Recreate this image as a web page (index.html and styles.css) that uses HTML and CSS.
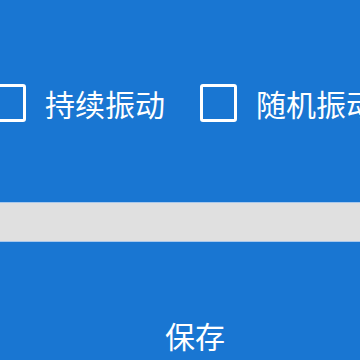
FILE: index.html
```html
<!DOCTYPE html>
<html lang="zh">
<head>
    <meta charset="UTF-8">
    <meta name="viewport" content="width=device-width, initial-scale=1.0">
    <title>振动设置</title>
    <link rel="stylesheet" href="styles.css">
</head>
<body>

    <!-- 振动模式 -->
    <div class="options">
        <label class="option">
            <span class="box"></span>
            <span class="label">持续振动</span>
        </label>
        <label class="option">
            <span class="box"></span>
            <span class="label">随机振动</span>
        </label>
    </div>

    <!-- 强度 -->
    <div class="track"></div>

    <!-- 保存 -->
    <div class="save">保存</div>

</body>
</html>
```

FILE: styles.css
```css
/* 基础 */
* {
    margin: 0;
    padding: 0;
    box-sizing: border-box;
}

body {
    font-family: "Noto Sans CJK SC", "Noto Sans", sans-serif;
    background-color: #1976d2;
    color: #fff;
    width: 360px;
    height: 360px;
    overflow: hidden;
}

/* 振动模式 */
.options {
    display: flex;
    align-items: center;
    padding-top: 84px;
    margin-left: -11px;
    white-space: nowrap;
}

.option {
    display: flex;
    align-items: center;
    gap: 19px;
    margin-right: 35px;
    flex-shrink: 0;
}

.box {
    width: 37px;
    height: 38px;
    border: 3px solid #fff;
    border-radius: 3px;
    flex-shrink: 0;
}

.label {
    font-size: 30px;
    line-height: 38px;
}

/* 强度条 */
.track {
    margin-top: 80px;
    height: 40px;
    background-color: #e0e0e0;
    border-top: 1px solid #a8c8ec;
    border-bottom: 1px solid #a8c8ec;
}

/* 保存 */
.save {
    margin-top: 76px;
    padding-left: 30px;
    text-align: center;
    font-size: 30px;
    line-height: 34px;
}
```
